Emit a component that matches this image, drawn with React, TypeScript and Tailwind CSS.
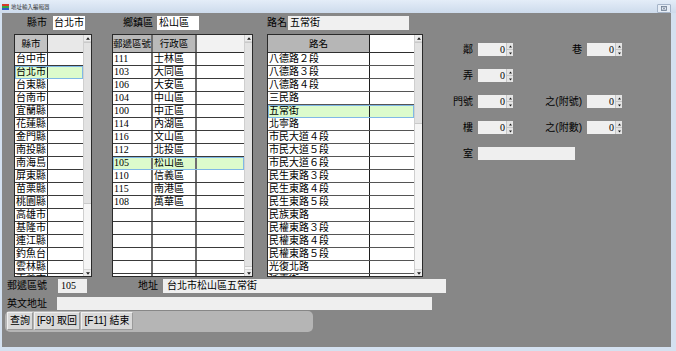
import React from "react";

const CJK = "font-['Liberation_Sans','Noto_Sans_CJK_TC','Noto_Sans_CJK_JP',sans-serif]";
const SERIF = "font-['Liberation_Serif','Noto_Sans_CJK_TC',serif]";

function Tri({ up, size = 5 }: { up: boolean; size?: number }) {
  return (
    <svg width={size} height={3} viewBox="0 0 5 3" className="block">
      {up ? <path d="M0 3 L2.5 0 L5 3Z" fill="#1e1e1e" /> : <path d="M0 0 L2.5 3 L5 0Z" fill="#1e1e1e" />}
    </svg>
  );
}

function ScrollBar({ thumbTop, thumbH }: { thumbTop: number; thumbH: number }) {
  return (
    <div className="w-[8px] h-full shrink-0 bg-[#f5f5f5] border-l border-[#cfcfcf] flex flex-col">
      <div className="h-[7px] shrink-0 flex items-center justify-center bg-[#ececec] border-b border-[#d6d6d6]">
        <Tri up size={4} />
      </div>
      <div className="shrink-0" style={{ height: thumbTop }} />
      <div className="shrink-0 bg-[#e2e2e2] border-y border-[#c9c9c9]" style={{ height: thumbH }} />
      <div className="flex-1" />
      <div className="h-[7px] shrink-0 flex items-center justify-center bg-[#ececec] border-t border-[#d6d6d6]">
        <Tri up={false} size={4} />
      </div>
    </div>
  );
}

type Col = { w: string; header: string; hbg: string; sep: string; serif?: boolean };

function Grid({
  cols,
  rows,
  sel,
  widthCls,
  rowLine,
  thumbTop,
  thumbH,
}: {
  cols: Col[];
  rows: string[][];
  sel: number;
  widthCls: string;
  rowLine: string;
  thumbTop: number;
  thumbH: number;
}) {
  const total = 18;
  return (
    <div className={`${widthCls} h-[243px] border border-[#2a2a2a] bg-white flex overflow-hidden`}>
      <div className="flex-1 flex flex-col overflow-hidden">
        <div className="flex h-[18px] shrink-0 border-b border-[#2e2e2e]">
          {cols.map((c, i) => (
            <div
              key={i}
              className={`${c.w} ${c.hbg} ${c.sep} h-full flex items-center justify-center text-[9.5px] leading-[12px] whitespace-nowrap overflow-hidden text-black ${CJK}`}
            >
              {c.header}
            </div>
          ))}
        </div>
        {Array.from({ length: total }).map((_, r) => {
          const row = rows[r] || [];
          const isSel = r === sel;
          return (
            <div
              key={r}
              className={`flex h-[13px] shrink-0 border-b ${rowLine} ${
                isSel ? "bg-[#dcfbcc] outline outline-1 -outline-offset-1 outline-[#7fb8e6]" : ""
              }`}
            >
              {cols.map((c, i) => (
                <div
                  key={i}
                  className={`${c.w} ${c.sep} h-full pl-[1px] text-[10px] leading-[12px] text-black whitespace-nowrap overflow-hidden ${
                    c.serif ? SERIF : CJK
                  }`}
                >
                  {row[i] ?? ""}
                </div>
              ))}
            </div>
          );
        })}
      </div>
      <ScrollBar thumbTop={thumbTop} thumbH={thumbH} />
    </div>
  );
}

function NumField() {
  return (
    <div className="w-[35px] h-[13px] bg-[#efefef] flex">
      <div className={`flex-1 text-right pr-[1px] text-[10px] leading-[13px] text-black ${SERIF}`}>0</div>
      <div className="w-[7px] h-full flex flex-col border-l border-[#c6c6c6] bg-[#e4e4e4]">
        <div className="flex-1 flex items-center justify-center border-b border-[#c6c6c6]">
          <Tri up size={3} />
        </div>
        <div className="flex-1 flex items-center justify-center">
          <Tri up={false} size={3} />
        </div>
      </div>
    </div>
  );
}

const counties = [
  "台中市", "台北市", "台東縣", "台南市", "宜蘭縣", "花蓮縣", "金門縣", "南投縣", "南海島",
  "屏東縣", "苗栗縣", "桃園縣", "高雄市", "基隆市", "連江縣", "釣魚台", "雲林縣", "嘉義市",
].map((c) => [c, ""]);

const districts = [
  ["111", "士林區"], ["103", "大同區"], ["106", "大安區"], ["104", "中山區"], ["100", "中正區"],
  ["114", "內湖區"], ["116", "文山區"], ["112", "北投區"], ["105", "松山區"], ["110", "信義區"],
  ["115", "南港區"], ["108", "萬華區"],
].map((r) => [r[0], r[1], ""]);

const roads = [
  "八德路２段", "八德路３段", "八德路４段", "三民路", "五常街", "北寧路", "市民大道４段",
  "市民大道５段", "市民大道６段", "民生東路３段", "民生東路４段", "民生東路５段", "民族東路",
  "民權東路３段", "民權東路４段", "民權東路５段", "光復北路", "延壽街",
].map((r) => [r, ""]);

const Label = ({ cls, children }: { cls: string; children: React.ReactNode }) => (
  <div className={`${cls} text-right text-[10px] leading-[12px] text-black whitespace-nowrap ${CJK}`}>{children}</div>
);

const btn =
  "h-[18px] bg-[#d9d9d9] border border-t-[#efefef] border-l-[#efefef] border-r-[#9a9a9a] border-b-[#9a9a9a] flex items-center justify-center text-[10px] leading-[12px] text-black whitespace-nowrap";

export default function App() {
  return (
    <div className={`w-[676px] h-[351px] bg-[#d4e1f0] flex flex-col overflow-hidden ${CJK}`}>
      {/* title bar */}
      <div className="h-[13px] shrink-0 flex items-center bg-gradient-to-b from-[#e4edf8] to-[#cddbec] pl-[2px] pr-[5px]">
        <svg width="7" height="6" viewBox="0 0 7 6" className="mt-[1px]">
          <rect x="0" y="0" width="7" height="2" fill="#d93b2b" />
          <rect x="0" y="2" width="7" height="2" fill="#3aa845" />
          <rect x="0" y="4" width="7" height="2" fill="#2d5fc7" />
        </svg>
        <span className="ml-[2px] text-[5.5px] leading-[6px] text-[#333] mt-[1px]">地址輸入編輯器</span>
        <div className="flex-1" />
        <div className="w-[14px] h-[9px] mt-[3px] border border-[#a5b4c8] bg-[#e6edf6] rounded-[1px] flex items-center justify-center">
          <svg width="6" height="5" viewBox="0 0 6 5">
            <rect x="0.5" y="0.5" width="5" height="4" fill="none" stroke="#6b7a8e" strokeWidth="0.8" />
            <path d="M1.5 1.2 L4.5 3.8 M4.5 1.2 L1.5 3.8" stroke="#6b7a8e" strokeWidth="0.8" />
          </svg>
        </div>
      </div>

      {/* body */}
      <div className="ml-[2px] mr-[5px] mb-[4px] flex-1 bg-[#878787] flex flex-col">
        {/* main area */}
        <div className="flex items-start pt-[3px] h-[264px] shrink-0">
          {/* col 1 */}
          <div className="ml-[12px] w-[78px] flex flex-col">
            <div className="h-[14px] flex items-center">
              <Label cls="w-[33px]">縣市</Label>
              <div className="ml-[6px] w-[32px] h-[14px] bg-white text-[10px] leading-[14px] pl-[1px] text-black whitespace-nowrap overflow-hidden">台北市</div>
            </div>
            <div className="mt-[4px]">
              <Grid
                widthCls="w-[78px]"
                cols={[
                  { w: "w-[33px]", header: "縣市", hbg: "bg-[#c2c2c2]", sep: "border-r border-[#2e2e2e]" },
                  { w: "w-[35px]", header: "", hbg: "bg-[#e8e8e8]", sep: "" },
                ]}
                rows={counties}
                sel={1}
                rowLine="border-[#3a3a3a]"
                thumbTop={0}
                thumbH={162}
              />
            </div>
          </div>

          {/* col 2 */}
          <div className="ml-[20px] w-[141px] flex flex-col">
            <div className="h-[14px] flex items-center">
              <Label cls="w-[41px]">鄉鎮區</Label>
              <div className="ml-[4px] w-[42px] h-[14px] bg-white text-[10px] leading-[14px] pl-[2px] text-black whitespace-nowrap overflow-hidden">松山區</div>
            </div>
            <div className="mt-[4px]">
              <Grid
                widthCls="w-[141px]"
                cols={[
                  { w: "w-[40px]", header: "郵遞區號", hbg: "bg-[#b9b9b9]", sep: "border-r-2 border-[#6e6e6e]", serif: true },
                  { w: "w-[44px]", header: "行政區", hbg: "bg-[#b9b9b9]", sep: "border-r-2 border-[#6e6e6e]" },
                  { w: "w-[47px]", header: "", hbg: "bg-[#f2f2f2]", sep: "" },
                ]}
                rows={districts}
                sel={8}
                rowLine="border-[#3a3a3a]"
                thumbTop={0}
                thumbH={225}
              />
            </div>
          </div>

          {/* col 3 */}
          <div className="ml-[14px] w-[156px] flex flex-col">
            <div className="h-[14px] flex items-center">
              <Label cls="w-[18px]">路名</Label>
              <div className="ml-[3px] w-[121px] h-[14px] bg-[#f0f0f0] text-[10px] leading-[14px] pl-[2px] text-black">五常街</div>
            </div>
            <div className="mt-[4px]">
              <Grid
                widthCls="w-[156px]"
                cols={[
                  { w: "w-[102px]", header: "路名", hbg: "bg-[#b6b6b6]", sep: "border-r border-[#1e1e1e]" },
                  { w: "w-[44px]", header: "", hbg: "bg-white", sep: "" },
                ]}
                rows={roads}
                sel={4}
                rowLine="border-[#555555]"
                thumbTop={0}
                thumbH={82}
              />
            </div>
          </div>

          {/* right panel */}
          <div className="ml-[27px] mt-[27px] flex flex-col gap-[13px]">
            <div className="flex items-center h-[13px]">
              <Label cls="w-[23px] mr-[5px]">鄰</Label>
              <NumField />
              <Label cls="w-[69px] mr-[5px]">巷</Label>
              <NumField />
            </div>
            <div className="flex items-center h-[13px]">
              <Label cls="w-[23px] mr-[5px]">弄</Label>
              <NumField />
            </div>
            <div className="flex items-center h-[13px]">
              <Label cls="w-[23px] mr-[5px]">門號</Label>
              <NumField />
              <Label cls="w-[69px] mr-[5px]">之(附號)</Label>
              <NumField />
            </div>
            <div className="flex items-center h-[13px]">
              <Label cls="w-[23px] mr-[5px]">樓</Label>
              <NumField />
              <Label cls="w-[69px] mr-[5px]">之(附數)</Label>
              <NumField />
            </div>
            <div className="flex items-center h-[13px]">
              <Label cls="w-[23px] mr-[5px]">室</Label>
              <div className="w-[97px] h-[13px] bg-[#efefef]" />
            </div>
          </div>
        </div>

        {/* row B */}
        <div className="mt-[2px] h-[14px] flex items-center shrink-0">
          <Label cls="w-[45px]">郵遞區號</Label>
          <div className={`ml-[11px] w-[29px] h-[14px] bg-[#efefef] text-[10px] leading-[14px] pl-[3px] text-black ${SERIF}`}>105</div>
          <Label cls="ml-[51px] w-[20px]">地址</Label>
          <div className="ml-[5px] w-[283px] h-[14px] bg-[#efefef] text-[10px] leading-[14px] pl-[4px] text-black">台北市松山區五常街</div>
        </div>

        {/* row C */}
        <div className="mt-[4px] h-[13px] flex items-center shrink-0">
          <Label cls="w-[45px]">英文地址</Label>
          <div className="ml-[10px] w-[375px] h-[13px] bg-[#efefef]" />
        </div>

        {/* row D */}
        <div className="mt-[1px] ml-[3px] w-[308px] h-[21px] bg-[#b5b5b5] rounded-[5px] flex items-start pl-[2px] pt-[1px] gap-[1px] shrink-0">
          <div className={`w-[26px] ${btn}`}>查詢</div>
          <div className={`w-[46px] ${btn}`}>[F9] 取回</div>
          <div className={`w-[52px] ${btn}`}>[F11] 結束</div>
        </div>
      </div>
    </div>
  );
}
